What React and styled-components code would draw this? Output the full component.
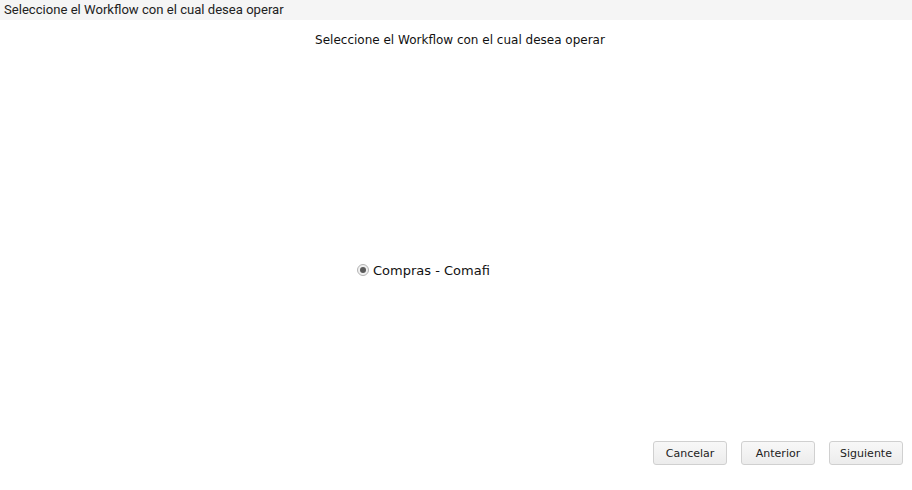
import React, { useState } from 'react';
import styled, { createGlobalStyle } from 'styled-components';

const GlobalStyle = createGlobalStyle`
  html, body { margin: 0; padding: 0; background: #fff; }
  #root { width: 912px; height: 490px; }
`;

const Page = styled.div`
  width: 912px;
  height: 490px;
  display: flex;
  flex-direction: column;
  background: #fff;
`;

const TitleBar = styled.div`
  height: 20px;
  background: #f5f5f5;
  padding-left: 4px;
  font-family: Roboto, 'Liberation Sans', sans-serif;
  font-size: 13.1px;
  line-height: 20px;
  color: #222;
`;

const Heading = styled.div`
  margin-top: 12px;
  text-align: center;
  font-family: 'DejaVu Sans', Verdana, sans-serif;
  font-size: 12px;
  line-height: 17px;
  color: #111;
  padding-left: 8px;
`;

const Body = styled.div`
  flex: 1;
  display: flex;
  justify-content: center;
  align-items: center;
  padding-top: 50px;
`;

const OptionList = styled.div`
  width: 198px;
  display: flex;
  flex-direction: column;
  align-items: flex-start;
`;

const Option = styled.label`
  display: flex;
  align-items: center;
  gap: 4px;
  font-family: 'DejaVu Sans', Verdana, sans-serif;
  font-size: 13px;
  color: #111;
  cursor: pointer;
`;

const RadioDot = styled.span`
  width: 12px;
  height: 12px;
  border-radius: 50%;
  border: 1px solid #b4b4b4;
  background: #f0f0f0;
  box-sizing: border-box;
  display: flex;
  align-items: center;
  justify-content: center;
  &::after {
    content: '';
    width: 6px;
    height: 6px;
    border-radius: 50%;
    background: ${p => (p.checked ? '#5a5a5a' : 'transparent')};
  }
`;

const Footer = styled.div`
  display: flex;
  justify-content: flex-end;
  gap: 14px;
  padding: 0 9px 25px 0;
`;

const Button = styled.button`
  width: 74px;
  height: 24px;
  box-sizing: border-box;
  border: 1px solid #d0d0d0;
  border-radius: 3px;
  background: linear-gradient(#f8f8f8, #ececec);
  font-family: 'DejaVu Sans', Verdana, sans-serif;
  font-size: 11px;
  color: #222;
  padding: 0;
  cursor: pointer;
`;

export default function App() {
  const [selected, setSelected] = useState('comafi');
  return (
    <Page>
      <GlobalStyle />
      <TitleBar>Seleccione el Workflow con el cual desea operar</TitleBar>
      <Heading>Seleccione el Workflow con el cual desea operar</Heading>
      <Body>
        <OptionList>
          <Option onClick={() => setSelected('comafi')}>
            <RadioDot checked={selected === 'comafi'} />
            Compras - Comafi
          </Option>
        </OptionList>
      </Body>
      <Footer>
        <Button>Cancelar</Button>
        <Button>Anterior</Button>
        <Button>Siguiente</Button>
      </Footer>
    </Page>
  );
}
